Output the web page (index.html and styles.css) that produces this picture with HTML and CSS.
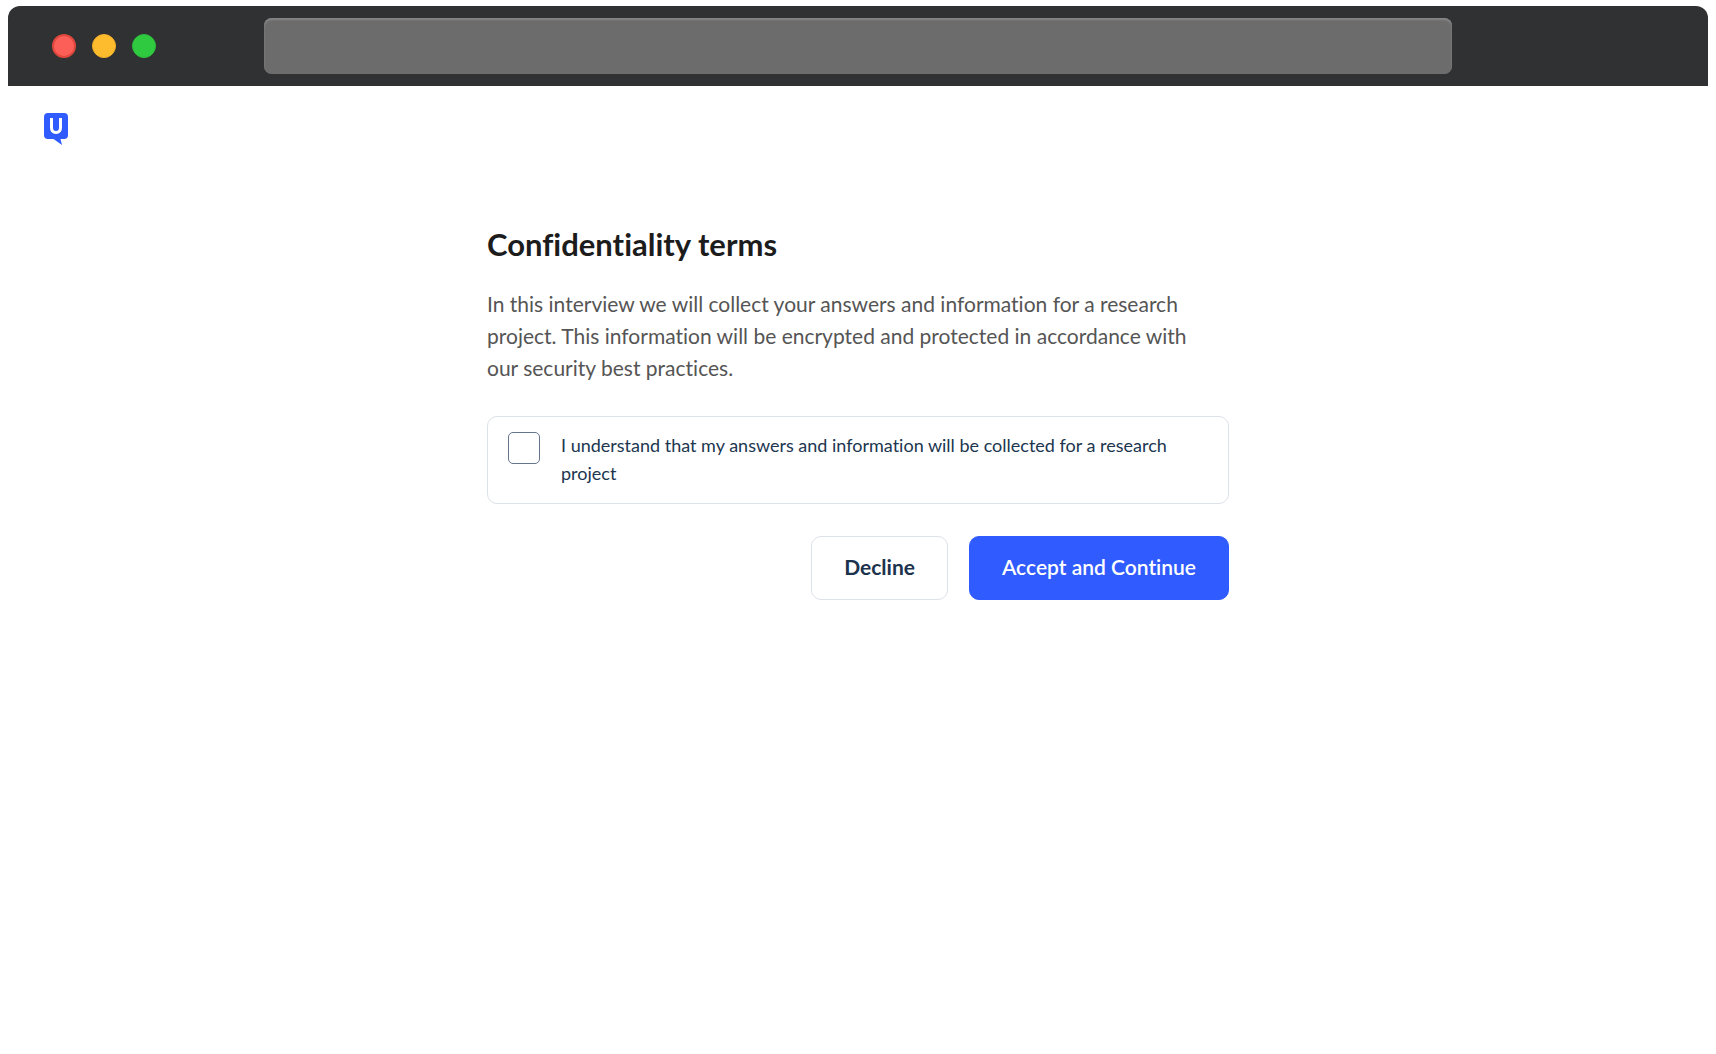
FILE: index.html
```
<!DOCTYPE html>
<html lang="en">
<head>
    <meta charset="UTF-8">
    <meta name="viewport" content="width=device-width, initial-scale=1.0">
    <title>Confidentiality terms</title>

    <link rel="stylesheet" href="styles.css">
</head>
<body>

    <div class="browser">
        <div class="dots">
            <span class="dot red"></span>
            <span class="dot yellow"></span>
            <span class="dot green"></span>
        </div>
        <input class="address" type="text" aria-label="Address">
    </div>

    <header class="header">
        <svg class="logo" viewBox="0 0 24 32" role="img" aria-label="Logo">
            <path fill="#2f5bff" d="M4 0H20Q24 0 24 4V22Q24 26 20 26H16.500L18 32L9.500 26H4Q0 26 0 22V4Q0 0 4 0Z"/>
            <path fill="none" stroke="#fff" stroke-width="3" d="M7.500 5V14.500Q7.500 19.500 12 19.500T16.500 14.500V5"/>
        </svg>
    </header>

    <main class="terms">
        <h1 class="title">Confidentiality terms</h1>
        <p class="text">In this interview we will collect your answers and information for a research project. This information will be encrypted and protected in accordance with our security best practices.</p>

        <form>
            <label class="agree" for="agree">
                <input class="checkbox" type="checkbox" id="agree">
                <span>I understand that my answers and information will be collected for a research project</span>
            </label>

            <div class="buttons">
                <button class="btn" type="button">Decline</button>
                <button class="btn btn-primary" type="submit">Accept and Continue</button>
            </div>
        </form>
    </main>

</body>
</html>
```
FILE: styles.css
```
* {
    box-sizing: border-box;
}
body {
    margin: 6px 8px;
    background: #fff;
    font-family: Lato, "Liberation Sans", sans-serif;
    font-variant-ligatures: none;
}

/* Browser bar */
.browser {
    display: grid;
    grid-template-columns: 256px 1fr 256px;
    align-items: center;
    height: 80px;
    background: #303133;
    border-radius: 12px 12px 0 0;
}
.dots {
    display: flex;
    gap: 16px;
    padding-left: 44px;
}
.dot {
    width: 24px;
    height: 24px;
    border-radius: 50%;
}
.red {
    background: #fc5f57;
    border: 2px solid #e0483e;
}
.yellow {
    background: #fdbc2e;
    border: 1px solid #f3b02b;
}
.green {
    background: #30ca41;
    border: 1px solid #2dbd3c;
}
.address {
    width: 100%;
    height: 56px;
    border: 0;
    border-radius: 8px;
    background: #6c6c6c;
    box-shadow: inset 0 2px 2px #868686, inset 0 0 1px #868686;
    padding: 0 16px;
    color: #fff;
    font-size: 20px;
}

.header {
    padding: 27px 36px 25px;
}
.logo {
    display: block;
    width: 24px;
    height: 32px;
}

/* Terms form */
.terms {
    max-width: 742px;
    margin: 0 auto;
    padding-top: 54px;
}
.title {
    margin: 0;
    font-size: 31px;
    line-height: 40px;
    font-weight: 700;
    color: #1c1c1c;
}
.text {
    margin: 24px 0 32px;
    padding-right: 24px;
    font-size: 21px;
    line-height: 32px;
    color: #555;
}
.agree {
    display: flex;
    align-items: flex-start;
    gap: 21px;
    padding: 14px 20px 16px;
    border: 1px solid #dde1e8;
    border-radius: 10px;
    font-size: 18px;
    line-height: 28px;
    color: #20364f;
}
.checkbox {
    appearance: none;
    flex: none;
    width: 32px;
    height: 32px;
    margin: 1px 0 0;
    border: 1px solid #66758b;
    border-radius: 5px;
    background: #fff;
}
.checkbox:checked {
    background: #2f5bff;
}
.buttons {
    display: flex;
    justify-content: flex-end;
    gap: 21px;
    margin-top: 32px;
}
.btn {
    height: 64px;
    padding: 0 32px 3px;
    border: 1px solid #dde1e8;
    border-radius: 10px;
    background: #fff;
    color: #1c334d;
    font-family: inherit;
    font-size: 21px;
    font-weight: 700;
    font-variant-ligatures: none;
    cursor: pointer;
}
.btn-primary {
    border-color: #2f5bff;
    background: #2f5bff;
    color: #fff;
    font-weight: 600;
}
```
